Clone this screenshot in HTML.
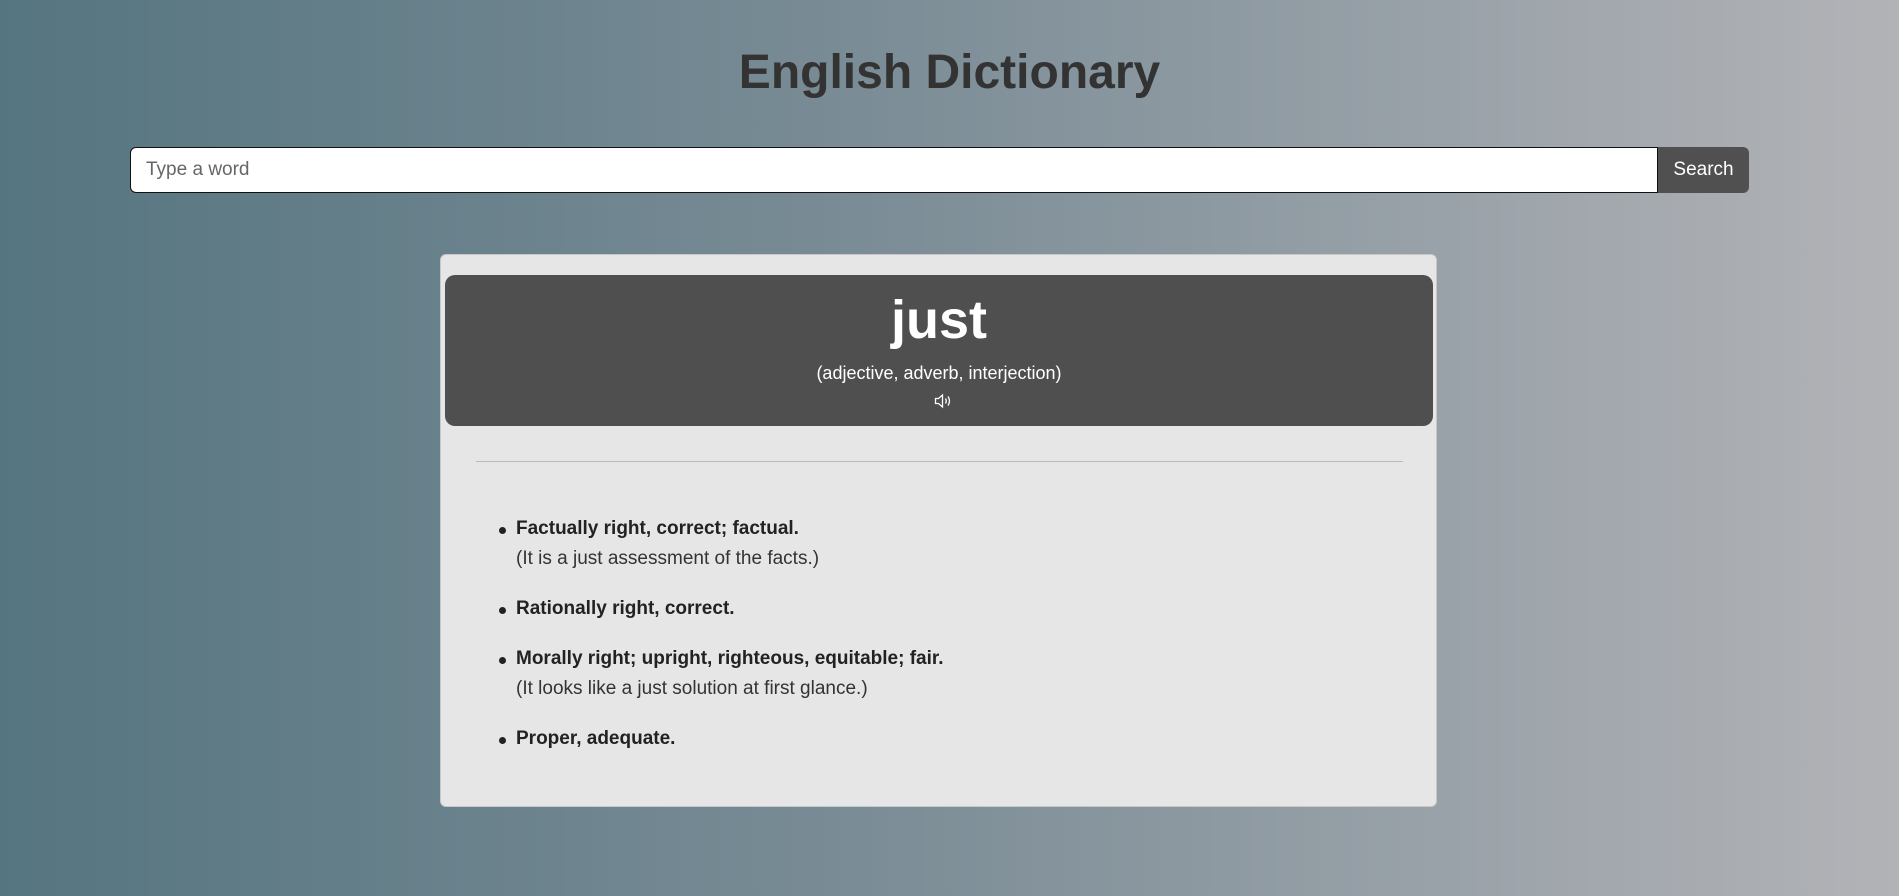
<!DOCTYPE html>
<html><head><meta charset="utf-8"><style>
html,body{margin:0;padding:0;width:1899px;height:896px;overflow:hidden}
body{background:linear-gradient(90deg,#557580 0%,#7a8c96 45%,#b2b3b7 100%);font-family:"Liberation Sans",sans-serif;position:relative}
h1{position:absolute;left:0;right:0;top:38px;margin:0;text-align:center;font-size:48px;font-weight:bold;color:#333;line-height:70px}
.inp{position:absolute;left:130px;top:147px;width:1528px;height:46px;box-sizing:border-box;background:#fff;border:1px solid #111;border-radius:6px 0 0 6px;font-size:19px;color:#666;padding-left:15px;line-height:44px}
.btn{position:absolute;left:1658px;top:147px;width:91px;height:46px;background:#505050;color:#fff;border-radius:0 6px 6px 0;font-size:19px;text-align:center;line-height:46px}
.card{position:absolute;left:440px;top:254px;width:997px;height:553px;box-sizing:border-box;background:#e6e6e6;border:1px solid #c8c8c8;border-radius:6px}
.hd{position:absolute;left:4px;top:20px;width:988px;height:151px;background:#4f4f4f;border-radius:10px;color:#fff;text-align:center}
.w{position:absolute;left:0;right:0;top:10px;font-size:54px;font-weight:bold;line-height:70px}
.p{position:absolute;left:0;right:0;top:86px;font-size:18px;line-height:24px}
.ic{position:absolute;left:489px;top:118px}
.hr{position:absolute;left:35px;top:206px;width:927px;height:1px;background:#bbb}
ul{position:absolute;left:75px;top:259px;margin:0;padding:0;list-style:none;font-size:19px;color:#222}
li{position:relative;margin-bottom:20px;line-height:30px}
li:before{content:"";position:absolute;left:-17px;top:13px;width:7px;height:7px;border-radius:50%;background:#222}
b{font-weight:bold}
.ex{color:#333}
</style></head><body>
<h1>English Dictionary</h1>
<div class="inp">Type a word</div>
<div class="btn">Search</div>
<div class="card">
 <div class="hd">
  <div class="w">just</div>
  <div class="p">(adjective, adverb, interjection)</div>
  <svg class="ic" width="20" height="16" viewBox="0 0 20 16" fill="none" stroke="#fff" stroke-width="1.3"><path d="M1.5 5.5h3l4-3.5v12l-4-3.5h-3z"/><path d="M11.5 5.5q1.5 2.5 0 5"/><path d="M14 3.5q3 4.5 0 9"/></svg>
 </div>
 <div class="hr"></div>
 <ul>
  <li><b>Factually right, correct; factual.</b><br><span class="ex">(It is a just assessment of the facts.)</span></li>
  <li><b>Rationally right, correct.</b></li>
  <li><b>Morally right; upright, righteous, equitable; fair.</b><br><span class="ex">(It looks like a just solution at first glance.)</span></li>
  <li><b>Proper, adequate.</b></li>
 </ul>
</div>
</body></html>
